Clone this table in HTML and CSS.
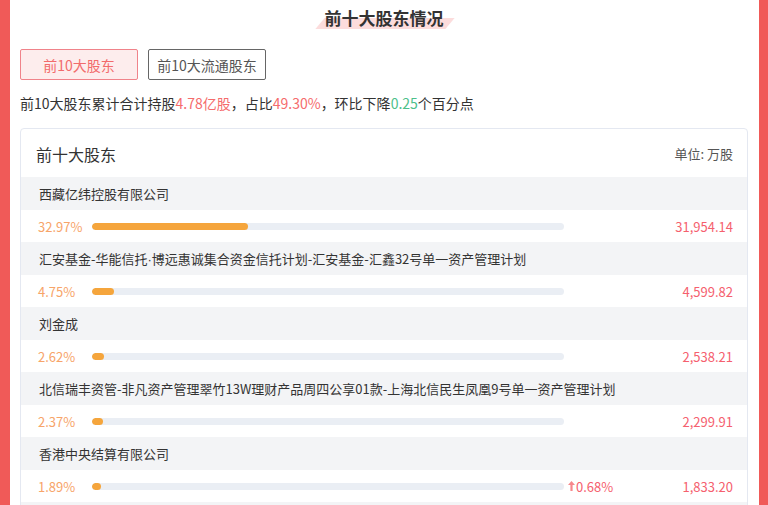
FILE: index.html
```html
<!DOCTYPE html>
<html lang="zh-CN">
<head>
<meta charset="utf-8">
<title>前十大股东情况</title>
<link rel="stylesheet" href="styles.css">
</head>
<body>
<div class="frame">
  <div class="title-wrap"><h1 class="title">前十大股东情况</h1></div>
  <div class="tabs">
    <button class="tab tab-active">前10大股东</button>
    <button class="tab">前10大流通股东</button>
  </div>
  <p class="summary">前10大股东累计合计持股<span class="red">4.78亿股</span>，占比<span class="red">49.30%</span>，环比下降<span class="green">0.25</span>个百分点</p>
  <div class="card">
    <div class="card-head"><span class="card-title">前十大股东</span><span class="unit">单位: 万股</span></div>
    <div class="name-row">西藏亿纬控股有限公司</div>
    <div class="bar-row"><span class="pct">32.97%</span><div class="track"><div class="fill" style="width:32.97%"></div></div><span class="spacer"></span><span class="val">31,954.14</span></div>
    <div class="name-row">汇安基金-华能信托<span class="dot">·</span>博远惠诚集合资金信托计划-汇安基金-汇鑫32号单一资产管理计划</div>
    <div class="bar-row"><span class="pct">4.75%</span><div class="track"><div class="fill" style="width:4.75%"></div></div><span class="spacer"></span><span class="val">4,599.82</span></div>
    <div class="name-row">刘金成</div>
    <div class="bar-row"><span class="pct">2.62%</span><div class="track"><div class="fill" style="width:2.62%"></div></div><span class="spacer"></span><span class="val">2,538.21</span></div>
    <div class="name-row">北信瑞丰资管-非凡资产管理翠竹13W理财产品周四公享01款-上海北信民生凤凰9号单一资产管理计划</div>
    <div class="bar-row"><span class="pct">2.37%</span><div class="track"><div class="fill" style="width:2.37%"></div></div><span class="spacer"></span><span class="val">2,299.91</span></div>
    <div class="name-row">香港中央结算有限公司</div>
    <div class="bar-row"><span class="pct">1.89%</span><div class="track"><div class="fill" style="width:1.89%"></div></div><span class="chg"><svg class="arrow" width="7" height="10" viewBox="0 0 7 10"><path d="M3.5 0 L7 4 L4.6 4 L4.6 10 L2.4 10 L2.4 4 L0 4 Z" fill="#f7888c"/></svg>0.68%</span><span class="spacer"></span><span class="val">1,833.20</span></div>
    <div class="name-row name-row-more"></div>
  </div>
</div>
</body>
</html>
```
FILE: styles.css
```css
html, body {
  margin: 0;
  padding: 0;
  overflow: hidden;
  background: #fff;
}
body {
  font-family: "Noto Sans CJK SC", "Microsoft YaHei", sans-serif;
  color: #333;
}
.frame {
  min-height: 505px;
  border-left: 10px solid #f05a58;
  border-right: 9px solid #f05a58;
  padding: 0 11px 0 10px;
  box-sizing: border-box;
}
.title-wrap {
  text-align: center;
  padding-top: 6px;
  height: 43px;
  box-sizing: border-box;
}
.title {
  position: relative;
  display: inline-block;
  margin: 0;
  font-size: 17px;
  line-height: 24px;
  font-weight: bold;
  color: #333;
  z-index: 0;
}
.title::before {
  content: "";
  position: absolute;
  left: -5px;
  right: -6px;
  top: 12px;
  height: 11px;
  background: #fcdcdc;
  transform: skewX(-40deg);
  z-index: -1;
}
.tabs {
  display: flex;
  gap: 10px;
  margin-top: 6px;
}
.tab {
  width: 118px;
  height: 31px;
  border: 1px solid #666;
  border-radius: 2px;
  background: #fff;
  color: #555;
  font-family: inherit;
  font-size: 14px;
  padding: 0;
  cursor: pointer;
}
.tab-active {
  border-color: #f0838a;
  background: #fdeded;
  color: #f26b6b;
}
.summary {
  margin: 13px 0 0;
  font-size: 14px;
  line-height: 20px;
  color: #333;
}
.red { color: #f56c6c; }
.green { color: #4cc08a; }
.card {
  margin-top: 15px;
  border: 1px solid #e4e8f1;
  border-radius: 4px;
}
.card-head {
  display: flex;
  justify-content: space-between;
  align-items: center;
  height: 48px;
  padding: 1px 14px 0 15px;
  box-sizing: border-box;
}
.card-title {
  font-size: 16px;
  color: #333;
}
.unit {
  font-size: 13px;
  color: #555;
}
.name-row {
  height: 33px;
  line-height: 33px;
  background: #f3f4f6;
  padding-left: 18px;
  font-size: 13px;
  color: #333;
  white-space: nowrap;
}
.dot {
  font-family: "Liberation Sans", sans-serif;
}
.name-row-more {
  height: 20px;
}
.bar-row {
  display: flex;
  align-items: center;
  height: 32px;
  padding: 0 14px 0 17px;
  font-size: 13px;
}
.pct {
  width: 54px;
  color: #f7a469;
}
.track {
  width: 472px;
  height: 7px;
  border-radius: 4px;
  background: #eaeef4;
  overflow: hidden;
}
.fill {
  height: 100%;
  border-radius: 4px;
  background: #f5a53c;
}
.chg {
  margin-left: 4px;
  color: #f5606e;
  display: flex;
  align-items: center;
}
.arrow {
  margin-right: 1px;
}
.spacer { flex: 1; }
.val {
  color: #f5606e;
}
```
